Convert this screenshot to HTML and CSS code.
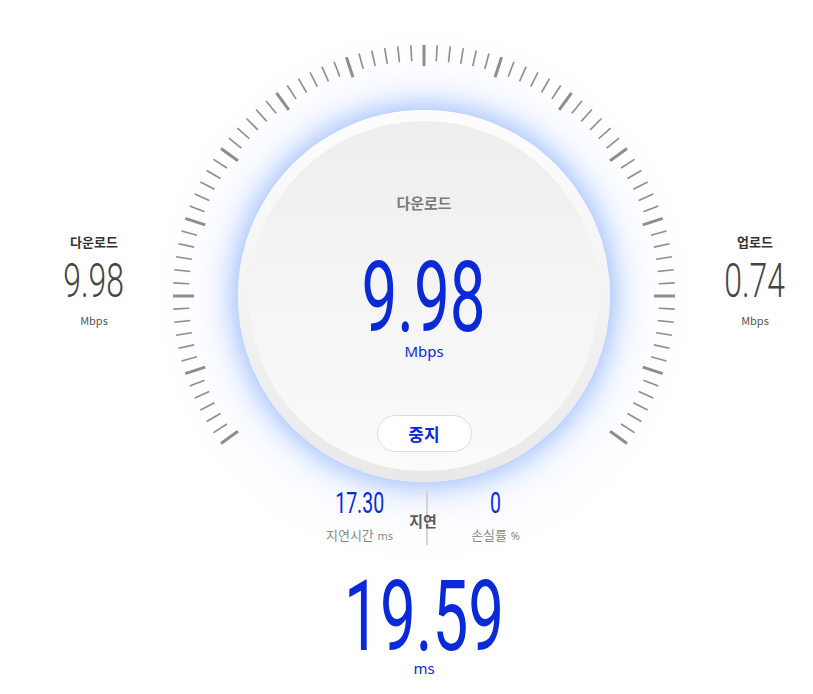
FILE: index.html
```html
<!DOCTYPE html>
<html lang="ko">
<head>
    <meta charset="UTF-8">
    <meta name="viewport" content="width=device-width, initial-scale=1.0">
    <title>속도 측정</title>
    <link rel="stylesheet" href="styles.css">
</head>
<body>
    <main class="speedtest">
        <div class="side-stat side-left">
            <p class="side-label">다운로드</p>
            <p class="side-value"><span class="num">9.98</span></p>
            <p class="side-unit">Mbps</p>
        </div>

        <div class="center">
            <div class="gauge">
                <svg id="ticks" class="ticks" width="504" height="446" viewBox="0 0 504 446"></svg>
                <div class="dial">
                    <div class="dial-face">
                        <p class="dial-label">다운로드</p>
                        <p class="dial-value"><span class="num">9.98</span></p>
                        <p class="dial-unit">Mbps</p>
                        <button class="stop-btn" type="button">중지</button>
                    </div>
                </div>
            </div>

            <div class="latency">
                <div class="latency-col latency-left">
                    <p class="latency-value"><span class="num">17.30</span></p>
                    <p class="latency-label">지연시간 <small>ms</small></p>
                </div>
                <div class="latency-col">
                    <p class="latency-value"><span class="num">0</span></p>
                    <p class="latency-label">손실률 <small>%</small></p>
                </div>
                <span class="latency-title">지연</span>
            </div>

            <div class="ping">
                <p class="ping-value"><span class="num">19.59</span></p>
                <p class="ping-unit">ms</p>
            </div>
        </div>

        <div class="side-stat side-right">
            <p class="side-label">업로드</p>
            <p class="side-value"><span class="num">0.74</span></p>
            <p class="side-unit">Mbps</p>
        </div>
    </main>

    <script>
        // draw the scale ticks around the dial (252 degrees, every 3 degrees)
        const svg = document.getElementById('ticks');
        const ns = 'http://www.w3.org/2000/svg';
        for (let i = 0; i <= 84; i++) {
            const major = i % 6 === 0;
            const a = (216 - i * 3) * Math.PI / 180;
            const outer = 251;
            const inner = major ? 230 : 235;
            const line = document.createElementNS(ns, 'line');
            line.setAttribute('x1', (252 + outer * Math.cos(a)).toFixed(2));
            line.setAttribute('y1', (252 - outer * Math.sin(a)).toFixed(2));
            line.setAttribute('x2', (252 + inner * Math.cos(a)).toFixed(2));
            line.setAttribute('y2', (252 - inner * Math.sin(a)).toFixed(2));
            line.setAttribute('class', major ? 'tick tick-major' : 'tick');
            svg.appendChild(line);
        }
    </script>
</body>
</html>
```

FILE: styles.css
```css
body {
    margin: 0;
    background-color: #fff;
    font-family: "Noto Sans CJK KR", "Noto Sans", sans-serif;
    color: #333;
}
p {
    margin: 0;
}
.num {
    display: inline-block;
    transform: scaleX(0.65);
}
.side-value,
.dial-value,
.latency-value,
.ping-value {
    font-family: Roboto, "Liberation Sans", sans-serif;
}
.speedtest {
    display: grid;
    grid-template-columns: 172px 504px 1fr;
    padding-top: 44px;
    height: 650px;
    overflow: hidden;
}

/* side stats */
.side-stat {
    text-align: center;
    padding-top: 189px;
}
.side-left {
    padding-left: 16px;
}
.side-right {
    padding-left: 21px;
    width: 116px;
}
.side-label {
    font-size: 13px;
    line-height: 18px;
    font-weight: 700;
    color: #333;
}
.side-value {
    margin-top: 10px;
    font-size: 49px;
    line-height: 40px;
    font-weight: 300;
    color: #444;
}
.side-unit {
    margin-top: 12px;
    font-size: 11px;
    line-height: 14px;
    color: #555;
}

/* gauge */
.center {
    display: flex;
    flex-direction: column;
}
.gauge {
    display: grid;
    width: 504px;
    height: 446px;
}
.ticks {
    grid-area: 1 / 1;
    overflow: visible;
}
.tick {
    stroke: #8d8d8d;
    stroke-width: 1.6;
}
.tick-major {
    stroke-width: 3;
}
.dial {
    grid-area: 1 / 1;
    justify-self: center;
    align-self: start;
    margin-top: 66px;
    width: 372px;
    height: 372px;
    box-sizing: border-box;
    padding: 11px;
    border-radius: 50%;
    background: linear-gradient(#fdfdfd, #e9e9e9);
    box-shadow: 0 0 26px 4px rgba(110, 155, 255, 0.6), 0 0 60px 16px rgba(160, 190, 255, 0.25);
}
.dial-face {
    height: 100%;
    border-radius: 50%;
    background: linear-gradient(#eeeeee, #fbfbfb);
    display: flex;
    flex-direction: column;
    align-items: center;
    padding-top: 72px;
    box-sizing: border-box;
}
.dial-label {
    font-size: 15px;
    line-height: 20px;
    font-weight: 700;
    color: #7a7a7a;
}
.dial-value {
    margin-top: 45px;
    font-size: 98px;
    line-height: 80px;
    color: #0a2ad8;
}
.dial-unit {
    margin-top: 4px;
    font-size: 15px;
    line-height: 18px;
    font-family: "Noto Sans", sans-serif;
    color: #0a2ad8;
}
.stop-btn {
    margin-top: 55px;
    width: 95px;
    height: 37px;
    border: 1px solid #dcdcdc;
    border-radius: 19px;
    background-color: #fff;
    font-family: "Noto Sans CJK KR", sans-serif;
    font-size: 17px;
    font-weight: 700;
    color: #0a2ad8;
    cursor: pointer;
}

/* latency */
.latency {
    position: relative;
    display: grid;
    grid-template-columns: 1fr 1fr;
    width: 270px;
    margin-left: 121px;
}
.latency-col {
    text-align: center;
}
.latency-left {
    border-right: 2px solid #d4d4d4;
}
.latency-value {
    font-size: 30px;
    line-height: 26px;
    color: #0a2ad8;
}
.latency-label {
    margin-top: 10px;
    font-size: 13px;
    line-height: 18px;
    color: #888;
}
.latency-label small {
    font-size: 11px;
    font-family: "Noto Sans", sans-serif;
}
.latency-title {
    position: absolute;
    left: 130px;
    top: 21px;
    transform: translateX(-50%);
    font-size: 15px;
    line-height: 20px;
    font-weight: 700;
    color: #5a5a5a;
}

/* ping */
.ping {
    text-align: center;
    margin-top: 32px;
}
.ping-value {
    font-size: 98px;
    line-height: 80px;
    color: #0a2ad8;
}
.ping-unit {
    margin-top: 2px;
    font-size: 15px;
    line-height: 18px;
    font-family: "Noto Sans", sans-serif;
    color: #0a2ad8;
}
```
